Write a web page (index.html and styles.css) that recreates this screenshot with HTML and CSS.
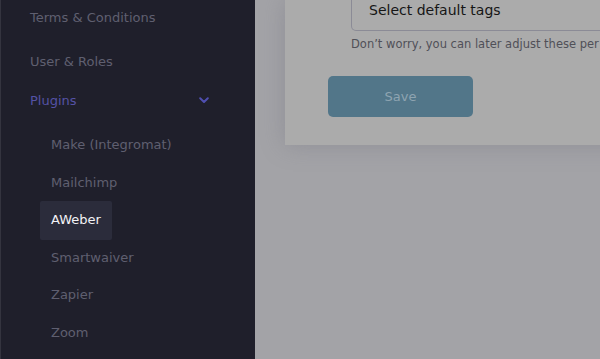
FILE: index.html
```html
<!DOCTYPE html>
<html>
<head>
<meta charset="utf-8">
<link rel="stylesheet" href="styles.css">
</head>
<body>
<div class="app">
  <aside class="sidebar">
    <div class="nav-item item-terms">Terms &amp; Conditions</div>
    <div class="nav-item item-users">User &amp; Roles</div>
    <div class="nav-item nav-open">
      <span>Plugins</span>
      <svg class="chevron" width="10" height="7" viewBox="0 0 10 7"><path d="M1.2 1.3 L5 5 L8.8 1.3" fill="none" stroke="#4f4fb0" stroke-width="2" stroke-linecap="round" stroke-linejoin="round"/></svg>
    </div>
    <div class="sub-list">
      <div class="sub-item">Make (Integromat)</div>
      <div class="sub-item">Mailchimp</div>
      <div class="sub-item active">AWeber</div>
      <div class="sub-item">Smartwaiver</div>
      <div class="sub-item">Zapier</div>
      <div class="sub-item">Zoom</div>
    </div>
  </aside>
  <main class="main">
    <div class="card">
      <div class="select">Select default tags</div>
      <p class="hint">Don’t worry, you can later adjust these per plugin settings.</p>
      <button class="save">Save</button>
    </div>
  </main>
</div>
</body>
</html>
```
FILE: styles.css
```css
* { box-sizing: border-box; }
html, body { margin: 0; padding: 0; }
body {
  width: 600px;
  height: 359px;
  overflow: hidden;
  font-family: "DejaVu Sans", "Open Sans", sans-serif;
  background: #a3a3a7;
}
.app {
  display: flex;
  height: 359px;
}
.sidebar {
  width: 255px;
  flex: none;
  background: #1f1f2b;
  border-left: 1px solid #34343f;
  display: flex;
  flex-direction: column;
}
.nav-item {
  padding-left: 29px;
  font-size: 13px;
  color: #5f5f70;
  height: 20px;
  line-height: 20px;
}
.item-terms { margin-top: 8px; }
.item-users { margin-top: 24px; }
.nav-open {
  margin-top: 19px;
  color: #5552a6;
  display: flex;
  align-items: center;
  justify-content: space-between;
  padding-right: 46px;
}
.chevron { display: block; margin-top: -1px; }
.sub-list {
  margin-top: 15px;
  padding-left: 39px;
  display: flex;
  flex-direction: column;
}
.sub-item {
  align-self: flex-start;
  height: 37.6px;
  line-height: 37px;
  padding: 0 11px;
  font-size: 13px;
  color: #5f5f70;
  border-radius: 2px;
}
.sub-item.active {
  background: #2b2c3b;
  color: #f2f2f5;
  height: 39px;
  line-height: 38px;
  margin: -0.7px 0;
}
.main {
  flex: 1;
  padding-left: 30px;
  overflow: hidden;
}
.card {
  width: 340px;
  height: 145px;
  background: #ababab;
  box-shadow: 0 0 22px rgba(120, 120, 130, 0.45);
  padding: 0 0 0 43px;
  display: flex;
  flex-direction: column;
  align-items: flex-start;
}
.select {
  margin-left: 23px;
  height: 41px;
  margin-top: -10px;
  border: 1px solid #8b8b96;
  border-top: none;
  border-radius: 0 0 5px 5px;
  padding: 11px 0 0 17px;
  font-size: 14px;
  line-height: 18px;
  color: #161616;
  white-space: nowrap;
  align-self: stretch;
}
.hint {
  margin: 5px 0 0 23px;
  font-size: 11.5px;
  line-height: 16px;
  color: #505058;
  white-space: nowrap;
}
.save {
  margin-top: 24px;
  width: 145px;
  height: 41px;
  border: none;
  border-radius: 5px;
  background: #527689;
  color: #8ea4b1;
  font-family: inherit;
  font-size: 13px;
}
```
